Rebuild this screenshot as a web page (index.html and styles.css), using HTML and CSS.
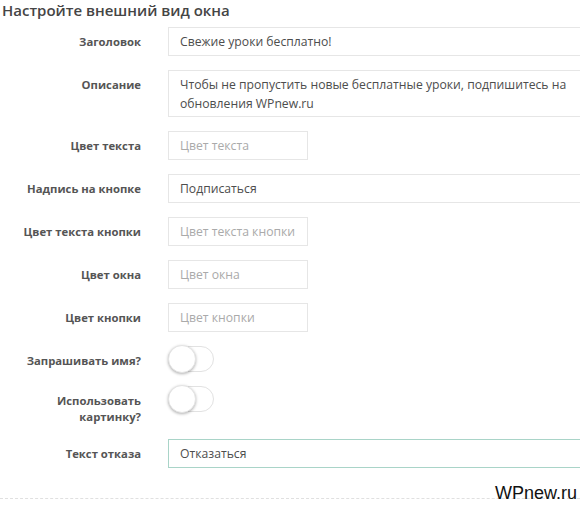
FILE: index.html
```html
<!DOCTYPE html>
<html lang="ru">
<head>
<meta charset="utf-8">
<title>Настройте внешний вид окна</title>
<link rel="stylesheet" href="styles.css">
</head>
<body>
<div class="page">
  <h2 class="title">Настройте внешний вид окна</h2>
  <div class="form">
    <label class="lbl">Заголовок</label>
    <input class="field wide" type="text" value="Свежие уроки бесплатно!">

    <label class="lbl">Описание</label>
    <textarea class="field wide area" rows="2">Чтобы не пропустить новые бесплатные уроки, подпишитесь на обновления WPnew.ru</textarea>

    <label class="lbl">Цвет текста</label>
    <input class="field short" type="text" placeholder="Цвет текста">

    <label class="lbl">Надпись на кнопке</label>
    <input class="field wide" type="text" value="Подписаться">

    <label class="lbl">Цвет текста кнопки</label>
    <input class="field short" type="text" placeholder="Цвет текста кнопки">

    <label class="lbl">Цвет окна</label>
    <input class="field short" type="text" placeholder="Цвет окна">

    <label class="lbl">Цвет кнопки</label>
    <input class="field short" type="text" placeholder="Цвет кнопки">

    <label class="lbl">Запрашивать имя?</label>
    <div class="toggle"><span class="knob"></span></div>

    <label class="lbl">Использовать<br>картинку?</label>
    <div class="toggle"><span class="knob"></span></div>

    <label class="lbl">Текст отказа</label>
    <input class="field wide focus" type="text" value="Отказаться">
  </div>
  <div class="divider"></div>
  <div class="mark">WPnew.ru</div>
</div>
</body>
</html>
```

FILE: styles.css
```css
html, body {
  margin: 0;
  padding: 0;
  background: #fff;
  overflow: hidden;
}
.page {
  position: relative;
  width: 580px;
  height: 505px;
  overflow: hidden;
  font-family: "Open Sans", "Liberation Sans", sans-serif;
}
.title {
  margin: 0 0 6px 2px;
  font-size: 15px;
  line-height: 21px;
  font-weight: 600;
  color: #454545;
}
.form {
  display: grid;
  grid-template-columns: 141px 450px;
  column-gap: 27px;
  row-gap: 14px;
  align-items: start;
}
.lbl {
  text-align: right;
  font-size: 11.3px;
  font-weight: 700;
  line-height: 16px;
  padding-top: 7px;
  color: #555;
}
.field {
  box-sizing: border-box;
  height: 29px;
  margin: 0;
  padding: 0 11px;
  border: 1px solid #e6e6e6;
  border-radius: 0;
  background: #fff;
  font-family: "Open Sans", "Liberation Sans", sans-serif;
  font-size: 12.2px;
  color: #4d4d4d;
  outline: none;
}
.field::placeholder {
  color: #aaa;
}
.wide {
  width: 450px;
}
.short {
  width: 140px;
}
.area {
  height: 47px;
  padding: 4px 11px;
  line-height: 19px;
  resize: none;
  overflow: hidden;
  display: block;
}
.focus {
  border-color: #a9d4c8;
}
.toggle {
  position: relative;
  box-sizing: border-box;
  width: 46px;
  height: 26px;
  border: 1px solid #e2e2e2;
  border-radius: 13px;
  background: #fff;
}
.knob {
  position: absolute;
  left: -1px;
  top: -2px;
  width: 28px;
  height: 28px;
  box-sizing: border-box;
  border-radius: 50%;
  background: #fff;
  border: 1px solid #e4e4e4;
  box-shadow: 0 1px 3px rgba(0, 0, 0, 0.3);
}
.divider {
  margin-top: 30px;
  border-top: 1px dashed #e0e0e0;
}
.mark {
  position: absolute;
  right: 3px;
  bottom: 2px;
  font-family: "Liberation Sans", Arial, sans-serif;
  font-size: 18px;
  line-height: 20px;
  color: #111;
}
```
